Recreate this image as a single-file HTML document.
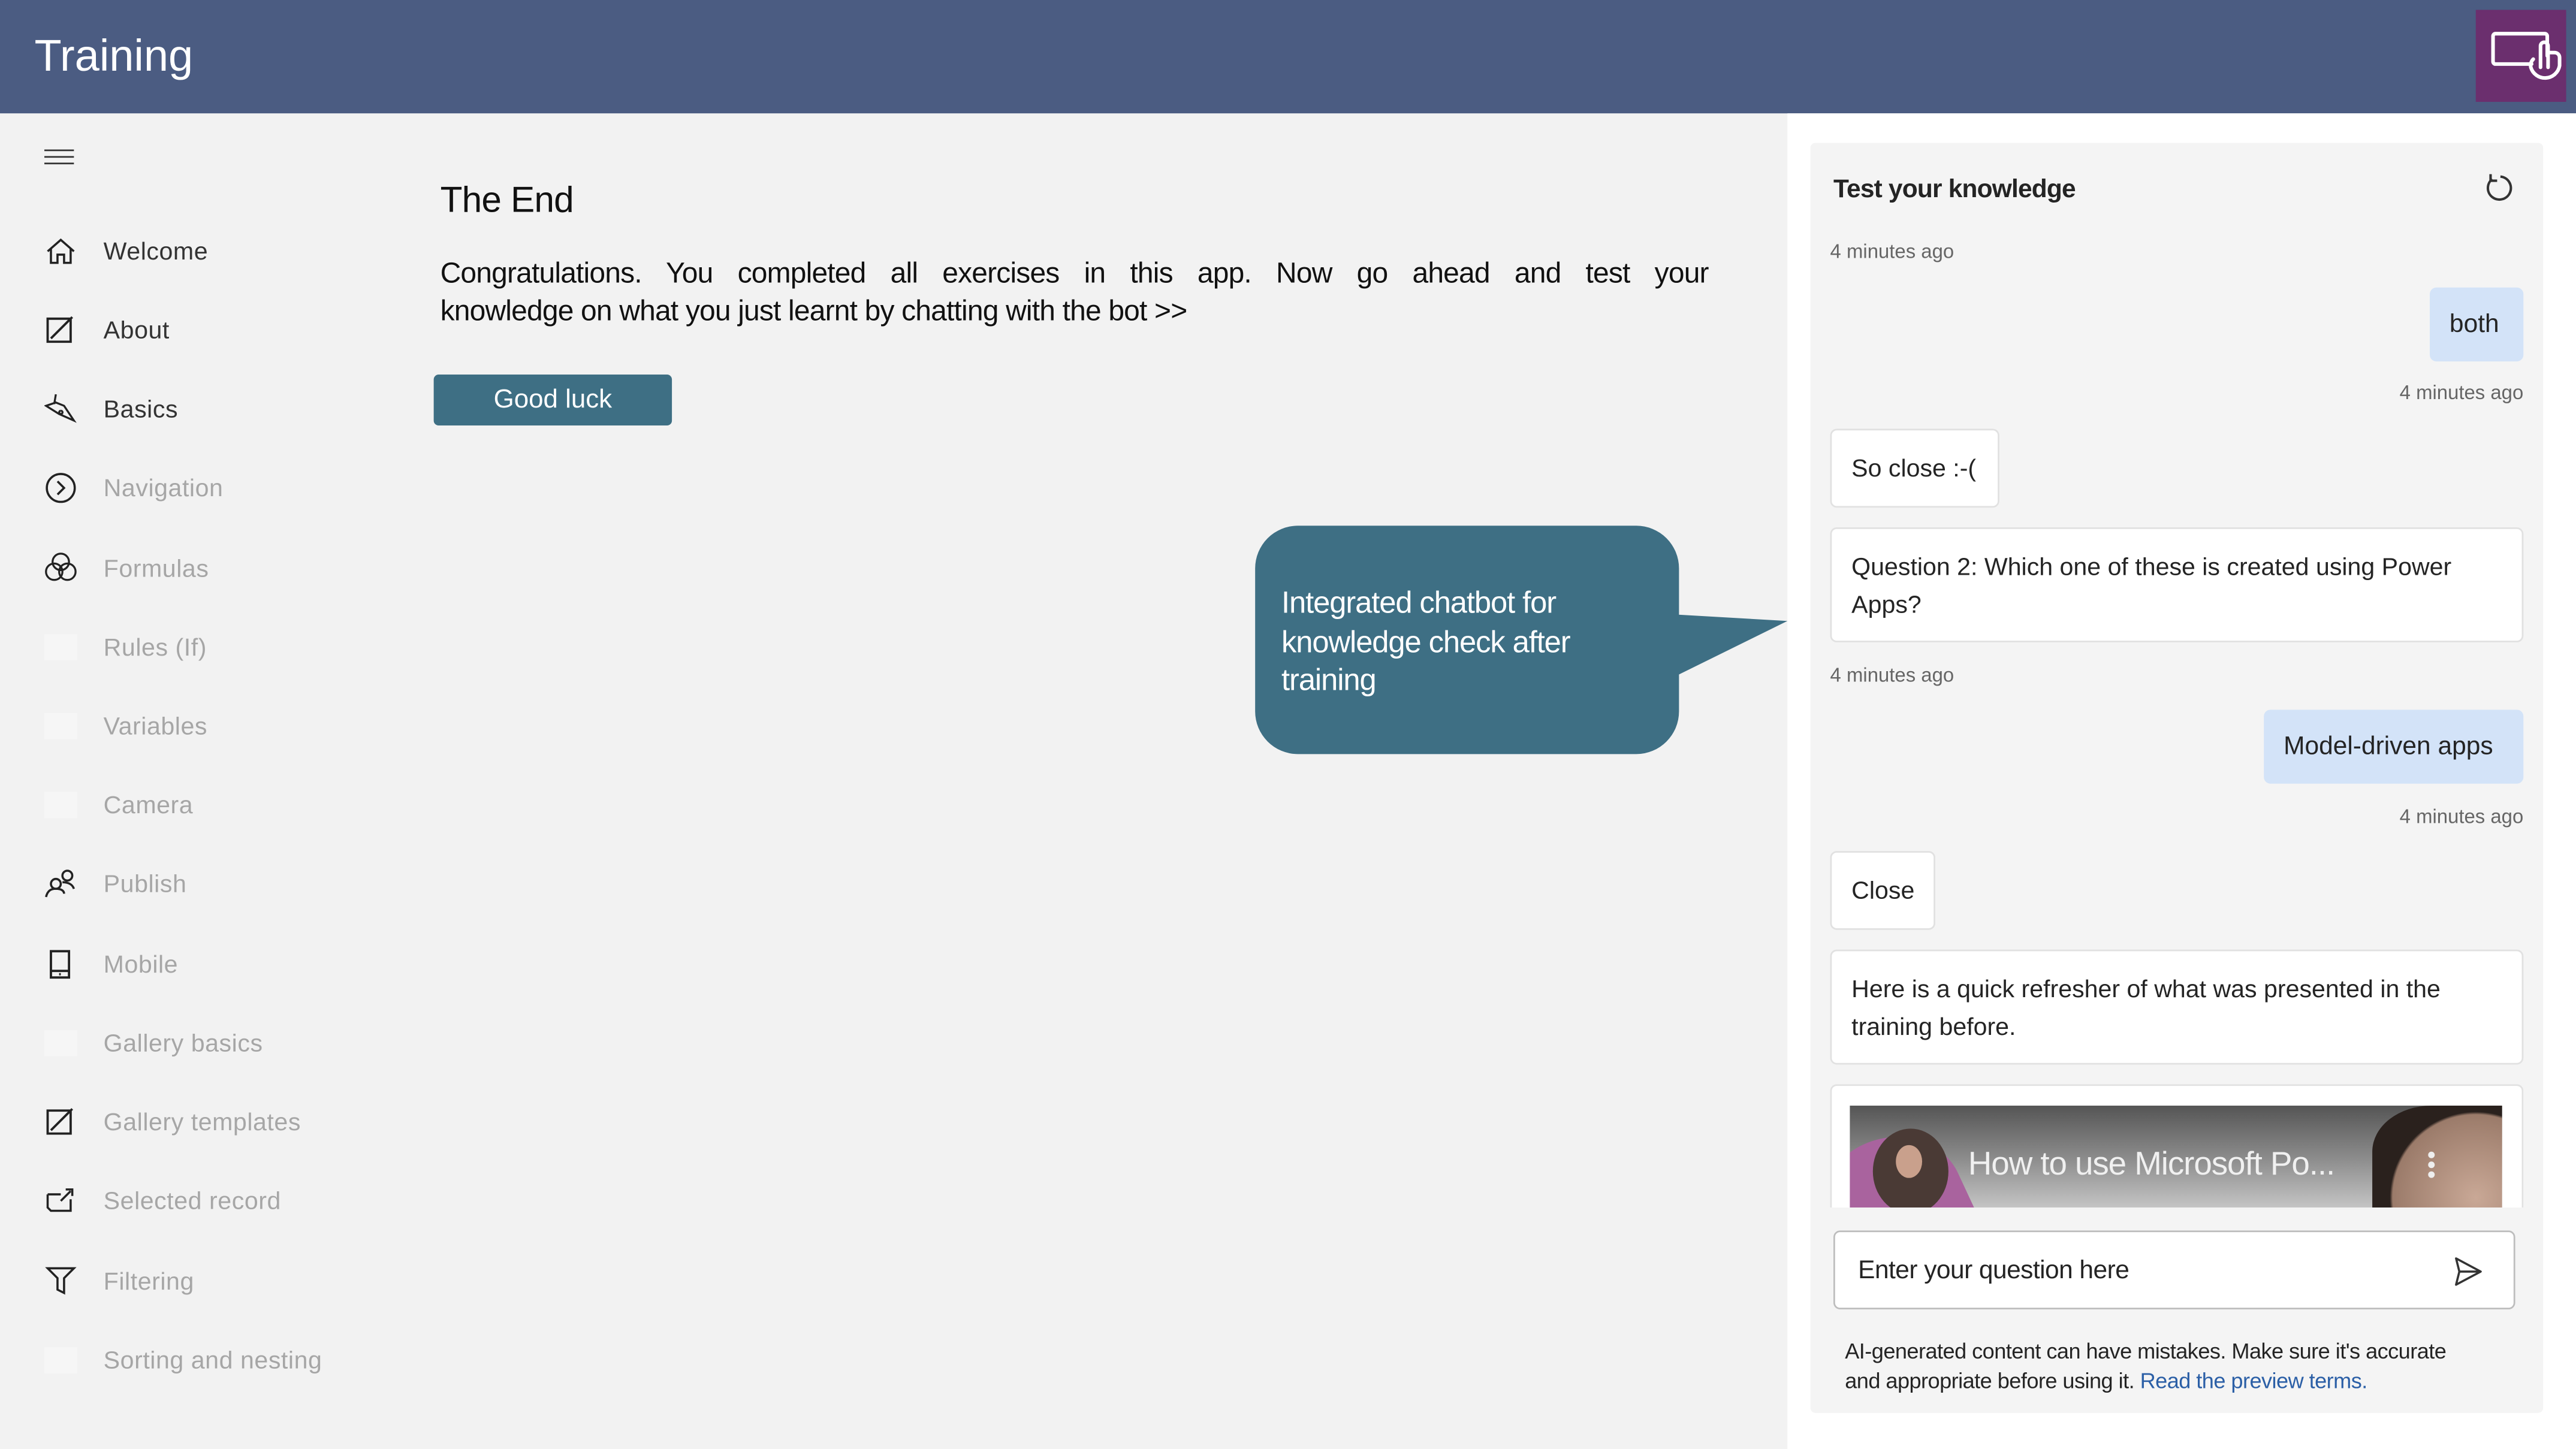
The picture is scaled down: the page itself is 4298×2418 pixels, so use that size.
<!DOCTYPE html>
<html><head><meta charset="utf-8"><style>
html,body{margin:0;padding:0;width:4298px;height:2418px;overflow:hidden;background:#f2f2f2}
#w{position:absolute;left:0;top:0;width:1568px;height:882px;transform:scale(2.74107,2.7415);transform-origin:0 0;font-family:"Liberation Sans",sans-serif;background:#f2f2f2;overflow:hidden}
.a{position:absolute}
.hdr{left:0;top:0;width:1568px;height:69px;background:#4b5c82}
.nav{left:63px;font-size:15px;color:#333;letter-spacing:0.2px}
.nav.d{color:#a6a6a6}
.ic{left:27px;width:20px;height:20px}
.ph{left:27px;width:20px;height:16px;background:#f6f6f6}
.bub{background:#fff;border:1px solid #e1e1e1;border-radius:4px;font-size:15px;color:#242424;padding:0 12px;box-sizing:border-box;line-height:23px}
.ts{font-size:12px;color:#666}
</style></head><body><div id="w">
<div class="a hdr"></div>
<div class="a" style="left:21px;top:19px;font-size:27px;color:#fff;letter-spacing:0px">Training</div>
<div class="a" style="left:1507px;top:6px;width:55px;height:56px;background:#6b2f6e"></div>
<svg class="a" style="left:1507px;top:6px" width="55" height="56" viewBox="0 0 55 56"><g fill="none" stroke="#fff" stroke-width="2.2" stroke-linecap="round" stroke-linejoin="round"><path d="M34 33H12a1.5 1.5 0 0 1-1.5-1.5V16a1.5 1.5 0 0 1 1.5-1.5h30a1.5 1.5 0 0 1 1.5 1.5v12"/><path d="M35 30a5.5 5.5 0 0 0-1.5 5 9 9 0 0 0 17.5-1v-5a3 3 0 0 0-3-3H44"/><path d="M44 35V22a2.3 2.3 0 0 0-4.6 0v13"/></g></svg>

<div class="a" style="left:1088px;top:69px;width:480px;height:813px;background:#fff"></div>
<div class="a" style="left:1102px;top:87px;width:446px;height:773px;background:#f4f4f4;border-radius:3px"></div>
<div class="a" style="left:1116px;top:107px;font-size:15.5px;font-weight:bold;color:#242424;letter-spacing:-0.3px">Test your knowledge</div>
<svg class="a" style="left:1511px;top:104px" width="22" height="22" viewBox="0 0 22 22"><path d="M6 5a7 7 0 1 0 5-1.5" fill="none" stroke="#333" stroke-width="1.5"/><path d="M5 2v4h4" fill="none" stroke="#333" stroke-width="1.5"/></svg>
<div class="a ts" style="left:1114px;top:146px">4 minutes ago</div>
<div class="a bub" style="left:1479px;top:175px;width:57px;height:45px;background:#d3e3f8;border:none;line-height:45px;font-size:15.5px">both</div>
<div class="a ts" style="right:32px;top:232px">4 minutes ago</div>
<div class="a bub" style="left:1114px;top:261px;width:103px;height:48px;line-height:48px">So close :-(</div>
<div class="a bub" style="left:1114px;top:321px;width:422px;height:70px;padding-top:12px">Question 2: Which one of these is created using Power Apps?</div>
<div class="a ts" style="left:1114px;top:404px">4 minutes ago</div>
<div class="a bub" style="left:1378px;top:432px;width:158px;height:45px;background:#d3e3f8;border:none;line-height:45px;font-size:15.5px">Model-driven apps</div>
<div class="a ts" style="right:32px;top:490px">4 minutes ago</div>
<div class="a bub" style="left:1114px;top:518px;width:64px;height:48px;line-height:48px">Close</div>
<div class="a bub" style="left:1114px;top:578px;width:422px;height:70px;padding-top:12px">Here is a quick refresher of what was presented in the training before.</div>
<div class="a" style="left:1114px;top:660px;width:422px;height:75px;background:#fff;border:1px solid #e1e1e1;border-bottom:none;border-radius:4px 4px 0 0;box-sizing:border-box"></div>
<div class="a" style="left:1126px;top:673px;width:397px;height:62px;background:linear-gradient(#555,#8a8a8a 50%,#c4c4c4);overflow:hidden">
 <div class="a" style="left:-20px;top:20px;width:90px;height:80px;background:#a9639e;border-radius:50% 50% 0 0;transform:rotate(-25deg)"></div>
 <div class="a" style="left:14px;top:14px;width:46px;height:52px;background:#4a3a35;border-radius:50%"></div>
 <div class="a" style="left:28px;top:24px;width:16px;height:20px;background:#c9a08c;border-radius:50%"></div>
 <div class="a" style="left:72px;top:25px;font-size:20px;color:#f0f0f0;letter-spacing:-0.4px">How to use Microsoft Po...</div>
 <div class="a" style="left:318px;top:0;width:90px;height:70px;background:radial-gradient(circle at 70% 80%,#c9a896,#9b7b6a 60%,#2a211d 62%);border-radius:40% 0 0 0"></div>
 <div class="a" style="left:352px;top:28px;width:4px;height:4px;background:#eee;border-radius:50%;box-shadow:0 6px 0 #eee,0 12px 0 #eee"></div>
</div>
<div class="a" style="left:1116px;top:749px;width:415px;height:48px;background:#fff;border:1px solid #bdbdbd;border-radius:4px;box-sizing:border-box"></div>
<div class="a" style="left:1131px;top:765px;font-size:15.5px;color:#242424;letter-spacing:-0.2px">Enter your question here</div>
<svg class="a" style="left:1492px;top:764px" width="20" height="20" viewBox="0 0 20 20"><path d="M3 2l15 8-15 8 2-8z M5 10h13" fill="none" stroke="#333" stroke-width="1.3" stroke-linejoin="round"/></svg>
<div class="a" style="left:1123px;top:814px;width:390px;font-size:13.2px;line-height:18px;color:#242424;letter-spacing:-0.2px">AI-generated content can have mistakes. Make sure it's accurate and appropriate before using it. <span style="color:#2b5fa6">Read the preview terms.</span></div>

<div class="a" style="left:27px;top:91px;width:18px;height:1px;background:#333;box-shadow:0 4px 0 #333,0 8px 0 #333"></div>
<svg class="a ic" style="top:143px" viewBox="0 0 20 20"><path d="M2 10L10 3l8 7M4 8.5V17h4v-5h4v5h4V8.5" fill="none" stroke="#222" stroke-width="1.3"/></svg>
<svg class="a ic" style="top:191px" viewBox="0 0 20 20"><path d="M2 3h14v14H2zM4 15L17 2" fill="none" stroke="#222" stroke-width="1.4"/></svg>
<svg class="a ic" style="top:239px" viewBox="0 0 20 20"><path d="M1 8l6-2 5 2 6 9-9-4zM7 1l-1 6M10 11a1 1 0 1 0 .1 0" fill="none" stroke="#222" stroke-width="1.2"/></svg>
<svg class="a ic" style="top:287px" viewBox="0 0 20 20"><circle cx="10" cy="10" r="8.5" fill="none" stroke="#222" stroke-width="1.3"/><path d="M8 6l4 4-4 4" fill="none" stroke="#222" stroke-width="1.3"/></svg>
<svg class="a ic" style="top:335px" viewBox="0 0 20 20"><g fill="none" stroke="#222" stroke-width="1.2"><circle cx="10" cy="7" r="5"/><circle cx="6" cy="13" r="5"/><circle cx="14" cy="13" r="5"/></g></svg>
<div class="a ph" style="top:386px"></div>
<div class="a ph" style="top:434px"></div>
<div class="a ph" style="top:482px"></div>
<svg class="a ic" style="top:528px" viewBox="0 0 20 20"><g fill="none" stroke="#222" stroke-width="1.3"><circle cx="7" cy="10" r="3"/><circle cx="14" cy="5" r="3"/><path d="M1 18c1-4 3-5 6-5s5 1 5 3M11 9c3 0 6 1 7 4"/></g></svg>
<svg class="a ic" style="top:577px" viewBox="0 0 20 20"><path d="M4 2h11v16H4zM4 14h11M9 16h1" fill="none" stroke="#222" stroke-width="1.4"/></svg>
<div class="a ph" style="top:627px"></div>
<svg class="a ic" style="top:673px" viewBox="0 0 20 20"><path d="M2 3h14v14H2zM4 15L17 2" fill="none" stroke="#222" stroke-width="1.4"/></svg>
<svg class="a ic" style="top:721px" viewBox="0 0 20 20"><path d="M2 6h8M16 9v7H4L2 14V6M10 10l6-6M13 3h4v4" fill="none" stroke="#222" stroke-width="1.3"/></svg>
<svg class="a ic" style="top:769px" viewBox="0 0 20 20"><path d="M2 3h16l-6 6v9l-4-2V9z" fill="none" stroke="#222" stroke-width="1.3"/></svg>
<div class="a ph" style="top:820px"></div>
<div class="a nav" style="top:145px">Welcome</div>
<div class="a nav" style="top:193px">About</div>
<div class="a nav" style="top:241px">Basics</div>
<div class="a nav d" style="top:289px">Navigation</div>
<div class="a nav d" style="top:338px">Formulas</div>
<div class="a nav d" style="top:386px">Rules (If)</div>
<div class="a nav d" style="top:434px">Variables</div>
<div class="a nav d" style="top:482px">Camera</div>
<div class="a nav d" style="top:530px">Publish</div>
<div class="a nav d" style="top:579px">Mobile</div>
<div class="a nav d" style="top:627px">Gallery basics</div>
<div class="a nav d" style="top:675px">Gallery templates</div>
<div class="a nav d" style="top:723px">Selected record</div>
<div class="a nav d" style="top:772px">Filtering</div>
<div class="a nav d" style="top:820px">Sorting and nesting</div>

<div class="a" style="left:268px;top:109px;font-size:22px;color:#111;letter-spacing:-0.3px">The End</div>
<div class="a" style="left:268px;top:155px;width:772px;font-size:17.5px;line-height:23px;color:#111;text-align:justify;text-align-last:justify;letter-spacing:-0.3px">Congratulations. You completed all exercises in this app. Now go ahead and test your</div>
<div class="a" style="left:268px;top:178px;width:772px;font-size:17.5px;line-height:23px;color:#111;letter-spacing:-0.3px">knowledge on what you just learnt by chatting with the bot &gt;&gt;</div>
<div class="a" style="left:264px;top:228px;width:145px;height:31px;background:#3e6f84;border-radius:3px;color:#fff;font-size:16px;text-align:center;line-height:31px">Good luck</div>
<svg class="a" style="left:764px;top:319px" width="330" height="141"><path d="M255 55L324 59 255 93z" fill="#3e6f84"/></svg>
<div class="a" style="left:764px;top:320px;width:258px;height:139px;background:#3e6f84;border-radius:26px"></div>
<div class="a" style="left:780px;top:355px;width:230px;font-size:18.5px;line-height:23.5px;color:#fff;letter-spacing:-0.4px">Integrated chatbot for knowledge check after training</div>
</div></body></html>
